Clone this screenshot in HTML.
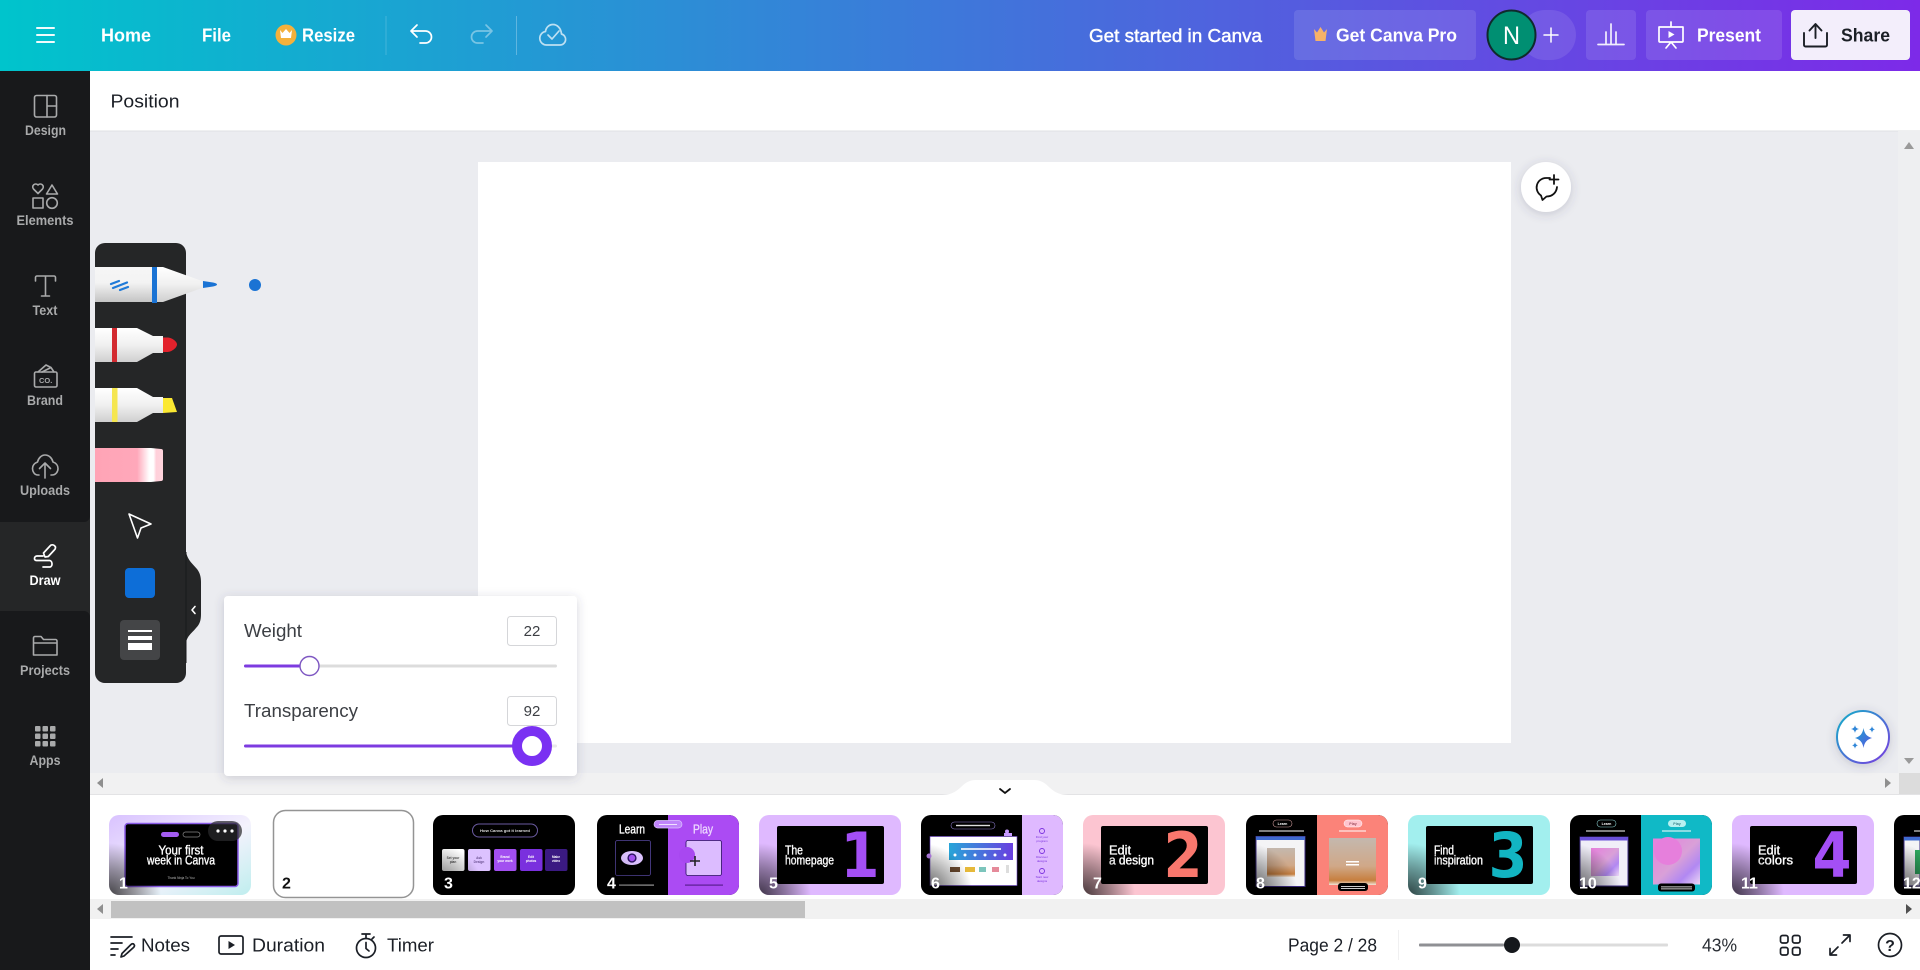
<!DOCTYPE html>
<html lang="en"><head><meta charset="utf-8"><title>Canva</title>
<style>
html,body{margin:0;padding:0;width:1920px;height:970px;overflow:hidden;background:#fff}
svg{display:block}
text{font-family:"Liberation Sans",sans-serif}
.w{fill:#fff;font-weight:700;font-size:18.5px}
.s{fill:#a9aaab;font-weight:700;font-size:13.5px;text-anchor:middle}
.d{fill:#1b1f26;font-size:18.5px}
.p{fill:#3c3f44;font-size:18.5px}
.n{fill:#fff;font-weight:700;font-size:16px}
.ic{fill:none;stroke:#a9aaab;stroke-width:1.6;stroke-linecap:round;stroke-linejoin:round}
.iw{fill:none;stroke:#fff;stroke-width:1.7;stroke-linecap:round;stroke-linejoin:round}
.ib{fill:none;stroke:#1b1f26;stroke-width:1.9;stroke-linecap:round;stroke-linejoin:round}
.t{fill:#fff;font-size:12.5px;stroke:#fff;stroke-width:.35}
.b{font-family:"DejaVu Sans",sans-serif;font-weight:700;font-size:62px;text-anchor:middle}
</style></head><body>
<svg width="1920" height="970" viewBox="0 0 1920 970" xmlns="http://www.w3.org/2000/svg">
<defs>
<linearGradient id="top" x1="0" x2="1" y1="0" y2="0"><stop offset="0" stop-color="#00c4cc"/><stop offset="1" stop-color="#7d2ae8"/></linearGradient>
<linearGradient id="body" x1="0" x2="0" y1="0" y2="1"><stop offset="0" stop-color="#f6f6f6"/><stop offset=".45" stop-color="#f3f3f3"/><stop offset="1" stop-color="#c4c4c4"/></linearGradient>
<linearGradient id="cone" x1="0" x2="0" y1="0" y2="1"><stop offset="0" stop-color="#fff"/><stop offset=".5" stop-color="#f0f0f0"/><stop offset="1" stop-color="#cfcfcf"/></linearGradient>
<linearGradient id="eras" x1="0" x2="1" y1="0" y2="0"><stop offset="0" stop-color="#ffa4b6"/><stop offset=".62" stop-color="#ffa8ba"/><stop offset=".8" stop-color="#fff"/><stop offset=".86" stop-color="#fff"/><stop offset=".9" stop-color="#ffd0da"/><stop offset="1" stop-color="#ffd4dd"/></linearGradient>
<linearGradient id="ring" x1="0" x2="1" y1="0" y2="1"><stop offset="0" stop-color="#12b0c8"/><stop offset="1" stop-color="#7a3be0"/></linearGradient>
<linearGradient id="star" x1="0" x2="1" y1="0" y2="1"><stop offset="0" stop-color="#1ba3d0"/><stop offset="1" stop-color="#5a55e0"/></linearGradient>
<linearGradient id="t1" x1="0" x2="1" y1="0" y2="1"><stop offset="0" stop-color="#d9c2ff"/><stop offset=".55" stop-color="#f4f2fd"/><stop offset="1" stop-color="#bfeeee"/></linearGradient>
<linearGradient id="banner" x1="0" x2="1" y1="0" y2="0"><stop offset="0" stop-color="#27a5d8"/><stop offset="1" stop-color="#6a3fe0"/></linearGradient>
<linearGradient id="tan" x1="0" x2="0" y1="0" y2="1"><stop offset="0" stop-color="#c4b8ae"/><stop offset=".6" stop-color="#d0a888"/><stop offset=".9" stop-color="#c77f3f"/><stop offset="1" stop-color="#f0e4d8"/></linearGradient>
<linearGradient id="pinkimg" x1="0" x2="1" y1="0" y2="1"><stop offset="0" stop-color="#e67fdc"/><stop offset=".5" stop-color="#d9a0d8"/><stop offset=".75" stop-color="#b188f2"/><stop offset="1" stop-color="#ecd8f5"/></linearGradient>
<radialGradient id="fade" gradientUnits="userSpaceOnUse" cx="0" cy="80" r="52"><stop offset="0" stop-color="#000" stop-opacity=".72"/><stop offset=".5" stop-color="#000" stop-opacity=".38"/><stop offset="1" stop-color="#000" stop-opacity="0"/></radialGradient>
<clipPath id="c"><rect width="142" height="80" rx="10"/></clipPath>
<filter id="sh" x="-30%" y="-30%" width="160%" height="160%"><feDropShadow dx="0" dy="2" stdDeviation="5" flood-color="#404060" flood-opacity=".22"/></filter>
<g id="fadeR"><rect x="0" y="20" width="70" height="60" fill="url(#fade)"/></g>
<g id="big"><rect x="18" y="11" width="107" height="58" rx="2" fill="#000"/></g>
</defs>

<!-- backgrounds -->
<rect width="1920" height="970" fill="#fff"/>
<rect x="90" y="131" width="1830" height="663" fill="#ebecf0"/>
<rect x="90" y="130.5" width="1830" height="1" fill="#dfe0e3"/>
<rect x="478" y="162" width="1033" height="581" fill="#fff"/>

<!-- scrollbars -->
<rect x="1898" y="131" width="22" height="642" fill="#eeeff1"/>
<path d="M1904 149h10l-5-7z" fill="#9a9a9a"/>
<path d="M1904 758h10l-5 6z" fill="#9a9a9a"/>
<rect x="90" y="773" width="1830" height="21" fill="#f1f1f2"/>
<rect x="1899" y="773" width="21" height="21" fill="#dcdcdc"/>
<path d="M103 778v10l-6-5z" fill="#8f8f8f"/>
<path d="M1885 778v10l6-5z" fill="#8f8f8f"/>
<rect x="90" y="794" width="1830" height="1" fill="#e3e3e5"/>
<path d="M940 795c10 0 14-2 20-7 5-5 9-8 16-8h58c7 0 11 3 16 8 6 5 10 7 20 7z" fill="#fff"/>
<path d="M1000 789l5 4 5-4" fill="none" stroke="#111" stroke-width="1.8" stroke-linecap="round"/>

<rect x="90" y="899" width="1830" height="20" fill="#f1f1f1"/>
<rect x="111" y="901" width="694" height="17" fill="#c1c1c1"/>
<path d="M103 904v10l-6-5z" fill="#8f8f8f"/>
<path d="M1906 904v10l6-5z" fill="#505050"/>

<!-- top bar -->
<rect width="1920" height="71" fill="url(#top)"/>
<path d="M37 28h17M37 35h17M37 42h17" stroke="#fff" stroke-width="2" stroke-linecap="round" opacity=".95"/>
<text class="w" x="101" y="41.500" textLength="50" lengthAdjust="spacingAndGlyphs">Home</text>
<text class="w" x="202" y="41.500" textLength="29" lengthAdjust="spacingAndGlyphs">File</text>
<circle cx="286" cy="35" r="10.5" fill="#f4b13c"/>
<path d="M280 30l2.500 3 3.500-4 3.500 4 2.500-3-1 8h-10z" fill="#fff"/>
<text class="w" x="302" y="41.500" textLength="53" lengthAdjust="spacingAndGlyphs">Resize</text>
<rect x="385.5" y="16" width="1" height="39" fill="#fff" opacity=".18"/>
<path class="iw" d="M417 25l-6 6 6 6M411 31h14.500a6 6 0 0 1 0 12H420"/>
<path class="iw" opacity=".4" d="M486 25l6 6-6 6M492 31h-14.500a6 6 0 0 0 0 12H483"/>
<rect x="516" y="16" width="1" height="39" fill="#fff" opacity=".28"/>
<path class="iw" opacity=".7" stroke-width="1.500" d="M547 45h13a5.600 5.600 0 0 0 1.500-11C561 28 557 24.500 553 24.500c-4 0-7 3-7.500 7A6.800 6.800 0 0 0 547 45zM548 35l4 4 7-8"/>

<text class="w" x="1089" y="42" textLength="173" lengthAdjust="spacingAndGlyphs" style="font-weight:400;stroke:#fff;stroke-width:.45">Get started in Canva</text>
<rect x="1294" y="10" width="182" height="50" rx="4" fill="#fff" opacity=".11"/>
<path d="M1314 29l3 3.500 3.500-5.500 3.500 5.500 3-3.500-1.500 12h-10z" fill="#f7b267"/>
<text class="w" x="1336" y="41.500" textLength="121" lengthAdjust="spacingAndGlyphs">Get Canva Pro</text>
<rect x="1520" y="10" width="56" height="50" rx="25" fill="#fff" opacity=".1"/>
<path d="M1551 28v14M1544 35h14" stroke="#fff" stroke-width="1.500" stroke-linecap="round"/>
<ellipse cx="1511.500" cy="35" rx="24" ry="24.500" fill="#008f72" stroke="#0f2a2c" stroke-width="2"/>
<text x="1511.500" y="44" fill="#fff" font-size="25" text-anchor="middle" textLength="17" lengthAdjust="spacingAndGlyphs">N</text>
<rect x="1586" y="10" width="50" height="50" rx="4" fill="#fff" opacity=".11"/>
<path class="iw" stroke-width="1.200" opacity=".9" d="M1598 44.500h26M1606 44V32M1611 44V24M1616 44V32"/>
<rect x="1646" y="10" width="136" height="50" rx="4" fill="#fff" opacity=".11"/>
<path class="iw" stroke-width="1.500" d="M1659 27h24v14a1 1 0 0 1-1 1h-22a1 1 0 0 1-1-1zM1671 22v5M1671 42l-5 6M1671 42l5 6"/>
<path d="M1668.500 31v7l6-3.500z" fill="#fff"/>
<text class="w" x="1697" y="41.500" textLength="64" lengthAdjust="spacingAndGlyphs">Present</text>
<rect x="1791" y="10" width="119" height="50" rx="4" fill="#f3eefb"/>
<path class="ib" stroke-width="1.700" d="M1804 33v12a1.500 1.500 0 0 0 1.500 1.500h20a1.500 1.500 0 0 0 1.500-1.500V33M1815.500 38V25M1809.500 30.500l6-6.500 6 6.500"/>
<text x="1841" y="41.500" fill="#1b1f26" font-size="18.500" font-weight="700" textLength="49" lengthAdjust="spacingAndGlyphs">Share</text>

<!-- subheader -->
<text class="d" x="110.500" y="107.500" textLength="69" lengthAdjust="spacingAndGlyphs">Position</text>

<!-- sidebar -->
<rect x="0" y="71" width="90" height="899" fill="#18191b"/>
<path d="M0 522h90v89H0z" fill="#252627"/>
<path d="M84 522a6 6 0 0 0 6-6v6zM84 611a6 6 0 0 1 6 6v-6z" fill="#252627"/>

<g class="ic">
<rect x="34.500" y="95.500" width="22" height="21.500" rx="2"/><path d="M47 95.500V117M47 106h9.500"/>
<path d="M38 193.500l-4.500-4.500a3 3 0 0 1 4.500-4 3 3 0 0 1 4.500 4z"/><path d="M52 185l5.500 9h-11z"/>
<rect x="33" y="198" width="10" height="10"/><circle cx="52" cy="203" r="5.300"/>
<path d="M35.500 281v-3.500a1.500 1.500 0 0 1 1.500-1.500h17a1.500 1.500 0 0 1 1.500 1.500v3.500M45.500 276v20M41.500 296h8"/>
<rect x="34.500" y="372" width="22.500" height="15" rx="1.500"/><path d="M38 372l8-7 5 2.500M42 372l9-4.500 3 4.500"/>
<path d="M39 475h-1C34 475 32.500 471 32.500 468.500 32.500 465 35 463 37.500 462 38.500 458 41.500 455 45 455 49 455 52 458 53 462 56 463 58 465.500 58 468.500 58 471.500 56 475 52 475h-1M45 478V463M39.500 468.500l5.500-5.500 5.500 5.500"/>
<path d="M33.500 655v-17a1.500 1.500 0 0 1 1.500-1.500h6l2.500 3h12a1.500 1.500 0 0 1 1.500 1.500v14h-23.500zM33.500 643h23.500"/>
</g>
<text x="45.700" y="383" fill="#a9aaab" font-size="7.500" font-weight="700" text-anchor="middle">CO.</text>
<g fill="#a9aaab">
<rect x="35" y="726" width="5.500" height="5.500" rx="1"/><rect x="42.500" y="726" width="5.500" height="5.500" rx="1"/><rect x="50" y="726" width="5.500" height="5.500" rx="1"/>
<rect x="35" y="733.500" width="5.500" height="5.500" rx="1"/><rect x="42.500" y="733.500" width="5.500" height="5.500" rx="1"/><rect x="50" y="733.500" width="5.500" height="5.500" rx="1"/>
<rect x="35" y="741" width="5.500" height="5.500" rx="1"/><rect x="42.500" y="741" width="5.500" height="5.500" rx="1"/><rect x="50" y="741" width="5.500" height="5.500" rx="1"/>
</g>
<path class="iw" d="M45 557l-1.500-4 6.500-7c1-1.500 3-1.500 4.500-.3s1.200 3-.2 4.300l-6 6.500zM43 556h-6c-3 0-3.500 4.500-.5 4.500h13c3 0 3.500 6 .5 6.500h-7"/>

<text class="s" x="45.500" y="135" textLength="41" lengthAdjust="spacingAndGlyphs">Design</text>
<text class="s" x="45" y="225" textLength="57" lengthAdjust="spacingAndGlyphs">Elements</text>
<text class="s" x="45" y="315" textLength="25" lengthAdjust="spacingAndGlyphs">Text</text>
<text class="s" x="45" y="405" textLength="36" lengthAdjust="spacingAndGlyphs">Brand</text>
<text class="s" x="45" y="495" textLength="50" lengthAdjust="spacingAndGlyphs">Uploads</text>
<text class="s" x="45" y="585" style="fill:#fff" textLength="31" lengthAdjust="spacingAndGlyphs">Draw</text>
<text class="s" x="45" y="675" textLength="50" lengthAdjust="spacingAndGlyphs">Projects</text>
<text class="s" x="45" y="765" textLength="31" lengthAdjust="spacingAndGlyphs">Apps</text>

<!-- draw toolbar -->
<path d="M95 253a10 10 0 0 1 10-10h71a10 10 0 0 1 10 10v299c2 9 7 12 11 17 3 4 4 8 4 13v32c0 6-1 10-5 14-4 5-8 7-10 14v31a10 10 0 0 1-10 10h-71a10 10 0 0 1-10-10z" fill="#252627"/>
<path d="M186 552v111" stroke="#18191b" stroke-width="1"/>
<path d="M195 606.500l-3 3.500 3 3.500" fill="none" stroke="#fff" stroke-width="1.600" stroke-linecap="round" stroke-linejoin="round"/>

<!-- blue marker -->
<path d="M95 267h68l39 14v7l-39 14H95z" fill="url(#cone)"/>
<rect x="95" y="267" width="58" height="35" fill="url(#body)"/>
<rect x="152" y="267" width="5" height="36" fill="#1a73d4"/>
<path d="M203 281l10 1.500c3 .5 4 1.500 4 2s-1 1.500-4 2l-10 1.500z" fill="#1a73d4"/>
<path d="M111 284l8-3M113 288l14-5.500M120 290l8-3" stroke="#1f7ad8" stroke-width="2.200" stroke-linecap="round"/>
<circle cx="255" cy="285" r="6" fill="#1a73d4"/>
<!-- red marker -->
<path d="M95 328h42l16 8h10v17h-10l-16 9H95z" fill="url(#cone)"/>
<rect x="112" y="328" width="5" height="34" fill="#d32a30"/>
<path d="M163 337.500h4c5 0 10 4 10 7s-5 7.500-10 7.500h-4z" fill="#e3222c"/>
<!-- yellow -->
<path d="M95 388h42l16 9h10v16h-10l-16 9H95z" fill="url(#cone)"/>
<rect x="112" y="388" width="5.500" height="34" fill="#f5e650"/>
<path d="M163 398h9l5 14-14 1z" fill="#fbe832"/>
<!-- eraser -->
<path d="M95 448h56l10 1a2 2 0 0 1 2 2v28a2 2 0 0 1-2 2l-10 1H95z" fill="url(#eras)"/>
<!-- cursor -->
<path d="M129 514l22 10-10 4-3.500 10z" fill="none" stroke="#fff" stroke-width="1.600" stroke-linejoin="round"/>
<rect x="125" y="568" width="30" height="30" rx="4" fill="#0d6ed8"/>
<rect x="120" y="620" width="40" height="40" rx="4" fill="#444547"/>
<rect x="128" y="630" width="24" height="2" fill="#fff"/><rect x="128" y="636" width="24" height="4" fill="#fff"/><rect x="128" y="643" width="24" height="7" fill="#fff"/>

<!-- weight panel -->
<rect x="224" y="596" width="353" height="180" rx="4" fill="#fff" filter="url(#sh)"/>
<text class="p" x="244" y="637" textLength="58" lengthAdjust="spacingAndGlyphs">Weight</text>
<rect x="507.500" y="616.500" width="49" height="29" rx="3" fill="#fff" stroke="#d5d6d9"/>
<text x="532" y="636" fill="#3c3f44" font-size="15" text-anchor="middle">22</text>
<rect x="244" y="664.500" width="313" height="3" rx="1.500" fill="#dcdcdc"/>
<rect x="244" y="664.500" width="62" height="3" rx="1.500" fill="#7d3be0"/>
<circle cx="309.500" cy="666" r="9.500" fill="#fff" stroke="#7e57c2" stroke-width="1.400"/>
<text class="p" x="244" y="717" textLength="114" lengthAdjust="spacingAndGlyphs">Transparency</text>
<rect x="507.500" y="696.500" width="49" height="29" rx="3" fill="#fff" stroke="#d5d6d9"/>
<text x="532" y="716" fill="#3c3f44" font-size="15" text-anchor="middle">92</text>
<rect x="244" y="744.500" width="313" height="3" rx="1.500" fill="#e9e9e9"/>
<rect x="244" y="744.500" width="288" height="3" rx="1.500" fill="#7d3be0"/>
<circle cx="532" cy="746" r="15" fill="#fff" stroke="#7a31f2" stroke-width="10"/>

<!-- comment -->
<circle cx="1546" cy="187" r="25" fill="#fff" filter="url(#sh)"/>
<path class="ib" style="stroke-width:1.800;stroke:#111" d="M1550 178h-4a9.500 9.500 0 0 0-5 17.500l1.500 4.500 4-3.500c6 0 10-4 10.500-9.500"/>
<path d="M1554 175v9M1549.500 179.500h9" stroke="#111" stroke-width="1.800" stroke-linecap="round"/>

<!-- magic -->
<circle cx="1863" cy="737" r="26" fill="#fff" stroke="url(#ring)" stroke-width="2" filter="url(#sh)"/>
<path d="M1863.500 728c1 6 3.500 8.500 8.500 10-5 1.500-7.500 4-8.500 10-1-6-3.500-8.500-8.500-10 5-1.500 7.500-4 8.500-10z" fill="url(#star)"/>
<path d="M1855 725c.5 2.500 1.500 3.500 4 4-2.500.5-3.500 1.500-4 4-.5-2.500-1.500-3.500-4-4 2.500-.5 3.500-1.500 4-4zM1855 742c.3 2 1.200 3 3 3.400-1.800.4-2.700 1.400-3 3.400-.3-2-1.200-3-3-3.400 1.800-.4 2.700-1.400 3-3.400zM1872 726c.3 2 1.200 3 3 3.400-1.800.4-2.700 1.400-3 3.400-.3-2-1.200-3-3-3.400 1.800-.4 2.700-1.400 3-3.400z" fill="#2f86d8"/>

<!-- thumb 1 -->
<g transform="translate(109,815)"><g clip-path="url(#c)">
<rect width="142" height="80" fill="url(#t1)"/>
<rect x="16" y="8.500" width="113" height="63" rx="3" fill="#000" stroke="#8a5be8" stroke-width="1.500"/>
<rect x="52" y="17" width="18" height="5" rx="2.500" fill="#a35cf0"/>
<rect x="74" y="17" width="17" height="5" rx="2.500" fill="#000" stroke="#888" stroke-width=".7"/>
<text class="t" x="72" y="39.500" text-anchor="middle" textLength="45" lengthAdjust="spacingAndGlyphs">Your first</text>
<text class="t" x="72" y="49.500" text-anchor="middle" textLength="68" lengthAdjust="spacingAndGlyphs">week in Canva</text>
<text x="72" y="64" text-anchor="middle" fill="#bbb" font-size="3.500" textLength="27" lengthAdjust="spacingAndGlyphs">Thank Ninja To You</text>
<use href="#fadeR"/>
<rect x="99" y="6" width="34" height="20" rx="10" fill="#2a2a2c" opacity=".72"/>
<circle cx="109" cy="16" r="1.600" fill="#fff"/><circle cx="116" cy="16" r="1.600" fill="#fff"/><circle cx="123" cy="16" r="1.600" fill="#fff"/>
</g><text class="n" x="10" y="73.500">1</text></g>

<!-- thumb 2 -->
<rect x="273.500" y="810.500" width="140" height="87" rx="12" fill="#fff" stroke="#949494" stroke-width="1.500"/>
<text class="n" x="282" y="888.500" style="fill:#111">2</text>

<!-- thumb 3 -->
<g transform="translate(433,815)"><g clip-path="url(#c)">
<rect width="142" height="80" fill="#000"/>
<rect x="39.500" y="9" width="65" height="13" rx="6.500" fill="none" stroke="#6a5aa0"/>
<text x="72" y="17" fill="#ddd" font-size="4" font-weight="700" text-anchor="middle" textLength="50" lengthAdjust="spacingAndGlyphs">How Canva got it learned</text>
<rect x="9" y="34" width="22.500" height="22" rx="2" fill="#fff"/>
<rect x="35" y="34" width="22.500" height="22" rx="2" fill="#dcc2ff"/>
<rect x="61" y="34" width="22.500" height="22" rx="2" fill="#a24ff0"/>
<rect x="87" y="34" width="22.500" height="22" rx="2" fill="#7a30de"/>
<rect x="112" y="34" width="22.500" height="22" rx="2" fill="#3b1a82"/>
<g font-size="3.200" text-anchor="middle" font-weight="700">
<text x="20" y="44" fill="#555">Set your</text><text x="20" y="48" fill="#555">plan</text>
<text x="46" y="44" fill="#6a5090">Ask</text><text x="46" y="48" fill="#6a5090">Design</text>
<text x="72" y="43" fill="#fff">Brand</text><text x="72" y="47" fill="#fff">your work</text>
<text x="98" y="43" fill="#fff">Edit</text><text x="98" y="47" fill="#fff">photos</text>
<text x="123" y="43" fill="#fff">Make</text><text x="123" y="47" fill="#fff">video</text>
</g>
<use href="#fadeR"/></g><text class="n" x="11" y="73.500">3</text></g>

<!-- thumb 4 -->
<g transform="translate(597,815)"><g clip-path="url(#c)">
<rect width="142" height="80" fill="#000"/><rect x="71" width="71" height="80" fill="#ab4bf3"/>
<text class="t" x="35" y="18.500" text-anchor="middle" textLength="26" lengthAdjust="spacingAndGlyphs">Learn</text>
<text class="t" x="106" y="18.500" text-anchor="middle" style="fill:#ecd4ff;stroke:#ecd4ff" textLength="20" lengthAdjust="spacingAndGlyphs">Play</text>
<rect x="57" y="5.500" width="28" height="7.500" rx="3.700" fill="#c084fb" stroke="#dcc2ff" stroke-width=".7"/>
<path d="M62 9.500h18" stroke="#fff" stroke-width=".7"/>
<rect x="18.500" y="25.500" width="35" height="35" rx="2" fill="none" stroke="#54459a" stroke-width=".8"/>
<ellipse cx="35" cy="43" rx="11" ry="7" fill="#dcc2ff"/><circle cx="35" cy="43" r="4.600" fill="#2a1060"/><circle cx="35" cy="43" r="3.200" fill="#a24ff0"/>
<rect x="89" y="25.500" width="35.500" height="35" rx="2" fill="#dcbcff" stroke="#2a1060" stroke-width=".8"/>
<circle cx="90" cy="40" r="8" fill="#a848f0"/>
<path d="M98 41v10M93 46h10" stroke="#222" stroke-width="1.600"/>
<rect x="88" y="69.500" width="38" height="1.200" fill="#5a1e90"/>
<rect x="22" y="69.500" width="35" height="1.200" fill="#999"/>
<use href="#fadeR" opacity=".35"/></g><text class="n" x="10" y="73.500">4</text></g>

<!-- thumb 5 -->
<g transform="translate(759,815)"><g clip-path="url(#c)">
<rect width="142" height="80" fill="#dfb9ff"/><use href="#big"/>
<text class="t" x="26" y="39.500" textLength="18" lengthAdjust="spacingAndGlyphs">The</text>
<text class="t" x="26" y="49.500" textLength="49" lengthAdjust="spacingAndGlyphs">homepage</text>
<text class="b" x="101" y="62" fill="#a44ff5" textLength="39" lengthAdjust="spacingAndGlyphs">1</text>
<use href="#fadeR"/></g><text class="n" x="10" y="73.500">5</text></g>

<!-- thumb 6 -->
<g transform="translate(921,815)"><g clip-path="url(#c)">
<rect width="142" height="80" fill="#000"/><rect x="101" width="41" height="80" fill="#dfb9ff"/>
<rect x="30" y="7" width="44" height="7" rx="3.500" fill="#000" stroke="#8b7bc8" stroke-width=".6"/>
<rect x="35" y="9.800" width="34" height="1.400" fill="#ddd"/>
<rect x="9" y="21.500" width="87" height="49" fill="#fff" stroke="#6a40c8" stroke-width=".6"/>
<rect x="28" y="28" width="64" height="17" fill="url(#banner)"/>
<rect x="40" y="33" width="40" height="2" fill="#fff" opacity=".8"/>
<g fill="#fff"><circle cx="34" cy="40" r="1.500"/><circle cx="44" cy="40" r="1.500"/><circle cx="54" cy="40" r="1.500"/><circle cx="64" cy="40" r="1.500"/><circle cx="74" cy="40" r="1.500"/><circle cx="84" cy="40" r="1.500"/></g>
<rect x="29" y="52" width="10" height="5" fill="#6b4a2f"/><rect x="44" y="52" width="10" height="5" fill="#e6b93a"/><rect x="58" y="52" width="7" height="5" fill="#7cc5bc"/><rect x="71" y="52" width="7" height="5" fill="#e58a9a"/><rect x="85" y="50" width="3" height="8" fill="#ddd"/>
<rect x="83" y="18" width="8" height="3" fill="#c79bff"/><circle cx="86" cy="16.500" r="2" fill="#c79bff"/>
<circle cx="8" cy="41" r="2.500" fill="#c88bff"/>
<g fill="none" stroke="#7a30de" stroke-width=".9"><circle cx="121" cy="16" r="2.500"/><circle cx="121" cy="36" r="2.500"/><circle cx="121" cy="56" r="2.500"/></g>
<g fill="#7a30de" font-size="3" text-anchor="middle"><text x="121" y="23">Find your</text><text x="121" y="27">program</text><text x="121" y="43">Discover</text><text x="121" y="47">designs</text><text x="121" y="63">Start new</text><text x="121" y="67">designs</text></g>
<use href="#fadeR"/></g><text class="n" x="10" y="73.500">6</text></g>

<!-- thumb 7 -->
<g transform="translate(1083,815)"><g clip-path="url(#c)">
<rect width="142" height="80" fill="#fcc5d1"/><use href="#big"/>
<text class="t" x="26" y="39.500" textLength="22" lengthAdjust="spacingAndGlyphs">Edit</text>
<text class="t" x="26" y="49.500" textLength="45" lengthAdjust="spacingAndGlyphs">a design</text>
<text class="b" x="100" y="62" fill="#f9776d" textLength="39" lengthAdjust="spacingAndGlyphs">2</text>
<use href="#fadeR"/></g><text class="n" x="10" y="73.500">7</text></g>

<!-- thumb 8 -->
<g transform="translate(1246,815)"><g clip-path="url(#c)">
<rect width="142" height="80" fill="#000"/><rect x="71" width="71" height="80" fill="#fb8379"/>
<rect x="27" y="5" width="19" height="7" rx="3.500" fill="#000" stroke="#c99" stroke-width=".6"/>
<text x="36.500" y="10" fill="#fff" font-size="3.600" font-weight="700" text-anchor="middle">Learn</text>
<rect x="13" y="15.500" width="45" height="1" fill="#fff"/>
<rect x="10" y="21.500" width="49" height="50" fill="#f4f4f6" stroke="#3b2a80" stroke-width="1"/>
<rect x="10" y="21.500" width="49" height="3.500" fill="#3f6bd0"/>
<rect x="21" y="33" width="28" height="29" fill="url(#tan)"/>
<rect x="98" y="5" width="18" height="7" rx="3.500" fill="#ffc4ce" stroke="#fff" stroke-width=".5"/>
<text x="107" y="10" fill="#a05060" font-size="3.600" font-weight="700" text-anchor="middle">Play</text>
<rect x="93" y="15.500" width="27" height="1" fill="#fff"/>
<rect x="83" y="23" width="47" height="47" fill="url(#tan)"/>
<rect x="100" y="46" width="13" height="1.500" fill="#fff"/><rect x="100" y="49" width="13" height="1.500" fill="#fff"/>
<rect x="92" y="68" width="30" height="8" rx="3" fill="#000"/><rect x="95" y="71" width="24" height=".8" fill="#fff"/><rect x="95" y="73" width="24" height=".8" fill="#fff"/>
<use href="#fadeR"/></g><text class="n" x="10" y="73.500">8</text></g>

<!-- thumb 9 -->
<g transform="translate(1408,815)"><g clip-path="url(#c)">
<rect width="142" height="80" fill="#a2efee"/><use href="#big"/>
<text class="t" x="26" y="39.500" textLength="20" lengthAdjust="spacingAndGlyphs">Find</text>
<text class="t" x="26" y="49.500" textLength="49" lengthAdjust="spacingAndGlyphs">inspiration</text>
<text class="b" x="100" y="62" fill="#12b5c2" textLength="39" lengthAdjust="spacingAndGlyphs">3</text>
<use href="#fadeR"/></g><text class="n" x="10" y="73.500">9</text></g>

<!-- thumb 10 -->
<g transform="translate(1570,815)"><g clip-path="url(#c)">
<rect width="142" height="80" fill="#000"/><rect x="71" width="71" height="80" fill="#10b9c6"/>
<rect x="27" y="5" width="19" height="7" rx="3.500" fill="#000" stroke="#8cc" stroke-width=".6"/>
<text x="36.500" y="10" fill="#fff" font-size="3.600" font-weight="700" text-anchor="middle">Learn</text>
<rect x="16" y="15.500" width="39" height="1" fill="#fff"/>
<rect x="10" y="22" width="48" height="49" fill="#f0eef8" stroke="#3b2a80" stroke-width="1"/>
<rect x="10" y="22" width="48" height="3.500" fill="#6a50d8"/>
<rect x="21" y="33" width="28" height="28" fill="url(#pinkimg)"/>
<rect x="98" y="5" width="18" height="7" rx="3.500" fill="#b8f0f0"/>
<text x="107" y="10" fill="#3a8088" font-size="3.600" font-weight="700" text-anchor="middle">Play</text>
<rect x="92" y="15.500" width="29" height="1" fill="#fff"/>
<rect x="83" y="23.500" width="47" height="46" fill="url(#pinkimg)"/>
<circle cx="98" cy="36" r="14" fill="#e67fdc"/>
<rect x="88" y="68.500" width="37" height="8" rx="3" fill="#000"/><rect x="91" y="71.500" width="31" height=".8" fill="#fff"/><rect x="91" y="73.500" width="31" height=".8" fill="#fff"/>
<use href="#fadeR"/></g><text class="n" x="9" y="73.500">10</text></g>

<!-- thumb 11 -->
<g transform="translate(1732,815)"><g clip-path="url(#c)">
<rect width="142" height="80" fill="#dfb9ff"/><use href="#big"/>
<text class="t" x="26" y="39.500" textLength="22" lengthAdjust="spacingAndGlyphs">Edit</text>
<text class="t" x="26" y="49.500" textLength="35" lengthAdjust="spacingAndGlyphs">colors</text>
<text class="b" x="100" y="62" fill="#a44ff5" textLength="39" lengthAdjust="spacingAndGlyphs">4</text>
<use href="#fadeR"/></g><text class="n" x="9" y="73.500">11</text></g>

<!-- thumb 12 -->
<g transform="translate(1894,815)"><g clip-path="url(#c)">
<rect width="142" height="80" fill="#000"/>
<rect x="20" y="15.500" width="6" height="1" fill="#fff"/>
<rect x="10" y="22" width="16" height="49" fill="#f4f4f6" stroke="#3b2a80" stroke-width="1"/>
<rect x="10" y="22" width="16" height="3.500" fill="#3f6bd0"/>
<rect x="21" y="35" width="5" height="24" fill="#2fa860"/>
<use href="#fadeR"/></g><text class="n" x="9" y="73.500">12</text></g>

<!-- bottom bar -->
<g class="ib" style="stroke-width:1.700">
<path d="M111 937h21M111 943h11M111 949h7M111 955h4M124 956l-3 1 1-3.500 9-9c1-1 2.500-1 3 0 .7.800.5 2-.5 3z"/>
<rect x="219" y="936" width="24" height="18" rx="2"/>
<path d="M362 934h8M366 934v4M372 939l2-2"/>
<circle cx="366" cy="948" r="9.500"/><path d="M366 942.500v6l3 2.500"/>
<rect x="1780.500" y="935.500" width="7.500" height="7.500" rx="2"/><rect x="1792.500" y="935.500" width="7.500" height="7.500" rx="2"/><rect x="1780.500" y="947.500" width="7.500" height="7.500" rx="2"/><rect x="1792.500" y="947.500" width="7.500" height="7.500" rx="2"/>
<path d="M1842 943l7-7M1843.500 935h6.500v6.500M1838 947l-7 7M1836.500 955h-6.500v-6.500"/>
<circle cx="1890" cy="945" r="11.500"/>
</g>
<path d="M228.500 941v8l6.500-4z" fill="#1b1f26"/>
<text class="d" x="141" y="951.500" textLength="49" lengthAdjust="spacingAndGlyphs">Notes</text>
<text class="d" x="252" y="951.500" textLength="73" lengthAdjust="spacingAndGlyphs">Duration</text>
<text class="d" x="387" y="951.500" textLength="47" lengthAdjust="spacingAndGlyphs">Timer</text>
<text class="d" x="1288" y="951.500" textLength="89" lengthAdjust="spacingAndGlyphs">Page 2 / 28</text>
<rect x="1398" y="930" width="1" height="30" fill="#f0f0f1"/>
<rect x="1419" y="943.500" width="249" height="3" rx="1" fill="#dcdcdc"/>
<rect x="1419" y="943.500" width="85" height="3" rx="1" fill="#8f9094"/>
<circle cx="1512" cy="945" r="8" fill="#15181c"/>
<text x="1702" y="951.500" fill="#2a2e34" font-size="18.500" textLength="35" lengthAdjust="spacingAndGlyphs">43%</text>
<text x="1890" y="951" fill="#1b1f26" font-size="16" font-weight="700" text-anchor="middle">?</text>
</svg>
</body></html>
